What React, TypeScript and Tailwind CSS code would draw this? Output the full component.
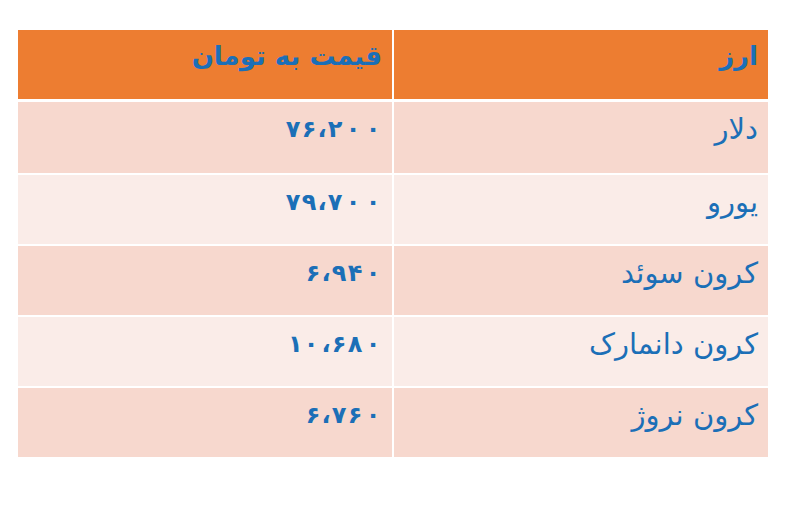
import React from "react";

const rows: [string, string][] = [
  ["دلار", "۷۶،۲۰۰"],
  ["یورو", "۷۹،۷۰۰"],
  ["کرون سوئد", "۶،۹۴۰"],
  ["کرون دانمارک", "۱۰،۶۸۰"],
  ["کرون نروژ", "۶،۷۶۰"],
];

function Digit({ ch }: { ch: string }) {
  const cls =
    ch === "۰"
      ? "w-[20px]"
      : ch === "،"
      ? "w-[10px]"
      : ch === "۱"
      ? "w-[13px]"
      : "w-[16px]";
  return <span className={`inline-block text-center ${cls}`}>{ch}</span>;
}

export default function App() {
  return (
    <div
      className="w-[800px] h-[520px] bg-white pt-[30px] pl-[18px]"
      style={{ fontFamily: '"DejaVu Sans", sans-serif' }}
    >
      <div dir="rtl" className="w-[750px] flex flex-col text-[#1b6fb7]">
        <div className="flex h-[72px] border-b-[3px] border-white bg-[#ed7d31] font-bold text-[26px] leading-[36px]">
          <div className="w-[374px] pr-[10px] pt-[8px] text-right">ارز</div>
          <div className="w-[2px] bg-white" />
          <div className="flex-1 pr-[10px] pt-[8px] text-right">قیمت به تومان</div>
        </div>
        {rows.map(([name, price], i) => (
          <div
            key={name}
            className={`flex h-[71px] leading-[36px] ${i > 0 ? "border-t-[2px] border-white" : ""} ${
              i % 2 === 0 ? "bg-[#f7d8ce]" : "bg-[#faece8]"
            }`}
          >
            <div className="w-[374px] pr-[10px] pt-[9px] text-right text-[29px]">{name}</div>
            <div className="w-[2px] bg-white" />
            <div className="flex-1 flex justify-start pr-[9px] pt-[9px]">
              <span dir="ltr" className="inline-flex font-bold text-[24px]">
                {Array.from(price).map((ch, j) => (
                  <Digit key={j} ch={ch} />
                ))}
              </span>
            </div>
          </div>
        ))}
      </div>
    </div>
  );
}
